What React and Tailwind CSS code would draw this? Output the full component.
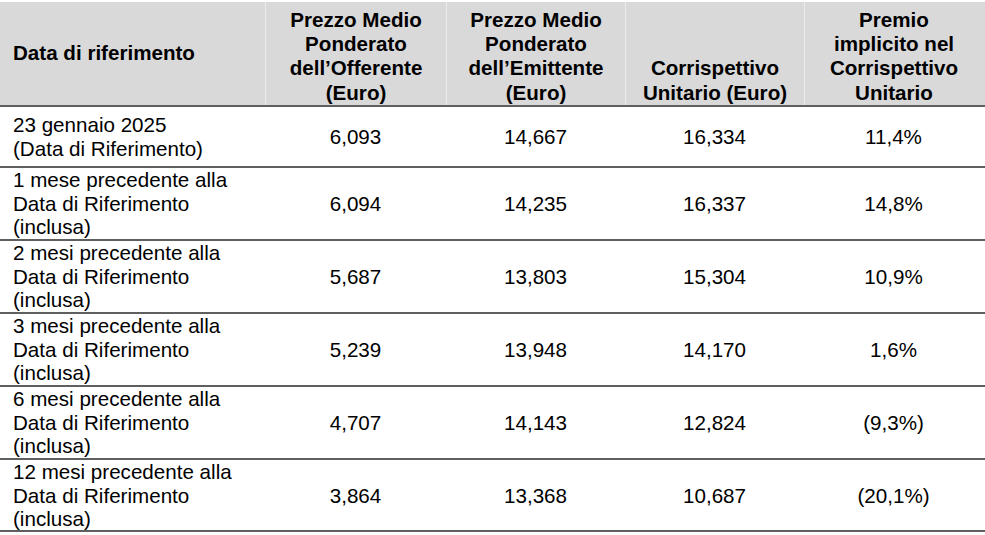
import React from "react";

const cols = "grid grid-cols-[265px_181px_179px_179px_179px]";

const rows = [
  { label: ["23 gennaio 2025", "(Data di Riferimento)"], v: ["6,093", "14,667", "16,334", "11,4%"] },
  { label: ["1 mese precedente alla", "Data di Riferimento", "(inclusa)"], v: ["6,094", "14,235", "16,337", "14,8%"] },
  { label: ["2 mesi precedente alla", "Data di Riferimento", "(inclusa)"], v: ["5,687", "13,803", "15,304", "10,9%"] },
  { label: ["3 mesi precedente alla", "Data di Riferimento", "(inclusa)"], v: ["5,239", "13,948", "14,170", "1,6%"] },
  { label: ["6 mesi precedente alla", "Data di Riferimento", "(inclusa)"], v: ["4,707", "14,143", "12,824", "(9,3%)"] },
  { label: ["12 mesi precedente alla", "Data di Riferimento", "(inclusa)"], v: ["3,864", "13,368", "10,687", "(20,1%)"] },
];

const headers = [
  ["Prezzo Medio", "Ponderato", "dell’Offerente", "(Euro)"],
  ["Prezzo Medio", "Ponderato", "dell’Emittente", "(Euro)"],
  ["Corrispettivo", "Unitario (Euro)"],
  ["Premio", "implicito nel", "Corrispettivo", "Unitario"],
];

const Lines = ({ lines }) =>
  lines.map((l, i) => (
    <React.Fragment key={i}>
      {l}
      {i < lines.length - 1 && <br />}
    </React.Fragment>
  ));

export default function App() {
  return (
    <div className="w-[985px] h-[535px] bg-white pt-[2px] text-black font-['Liberation_Sans',Arial,sans-serif] text-[20.6px]">
      <div className={`${cols} h-[105px] bg-[#d9d9d9] border-b-2 border-[#5f5f5f] font-bold leading-[24.3px]`}>
        <div className="flex items-center pl-[13px]">Data di riferimento</div>
        {headers.map((h, i) => (
          <div key={i} className="flex items-end justify-center text-center border-l border-[#ececec]">
            <div>
              <Lines lines={h} />
            </div>
          </div>
        ))}
      </div>
      {rows.map((r, i) => (
        <div
          key={i}
          className={`${cols} border-b-2 border-[#5f5f5f] leading-[23.5px] ${i === 0 ? "h-[61px]" : i === 5 ? "h-[72px]" : "h-[73px]"}`}
        >
          <div className="flex items-center pl-[13px]">
            <div>
              <Lines lines={r.label} />
            </div>
          </div>
          {r.v.map((v, j) => (
            <div key={j} className="flex items-center justify-center">
              {v}
            </div>
          ))}
        </div>
      ))}
    </div>
  );
}
